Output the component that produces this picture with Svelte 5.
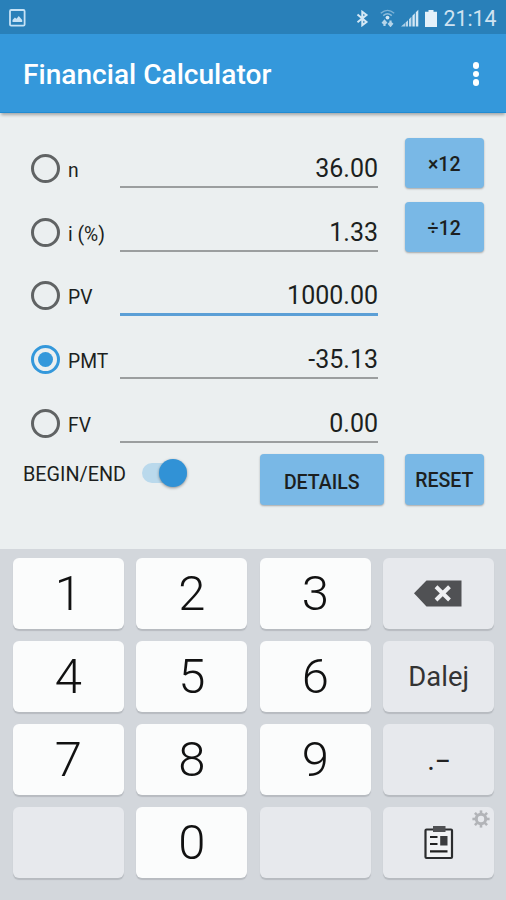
<script>
  // Financial calculator: five time-value fields, one of them is solved for.
  let rows = $state([
    { id: "n", label: "n", value: "36.00", action: "×12" },
    { id: "i", label: "i (%)", value: "1.33", action: "÷12" },
    { id: "pv", label: "PV", value: "1000.00" },
    { id: "pmt", label: "PMT", value: "-35.13" },
    { id: "fv", label: "FV", value: "0.00" },
  ]);

  let solveFor = $state("pmt");
  let focused = $state("pv");
  let atEnd = $state(true);

  // keypad, row by row
  const keys = [
    "1", "2", "3", "del",
    "4", "5", "6", "next",
    "7", "8", "9", "sign",
    "", "0", "", "clip",
  ];
  const isDigit = (k) => /^\d$/.test(k);

  function scale(row) {
    const v = Number(row.value);
    row.value = (row.action === "×12" ? v * 12 : v / 12).toFixed(2);
  }
  function reset() {
    for (const r of rows) r.value = "0.00";
  }
  function press(k) {
    const row = rows.find((r) => r.id === focused);
    if (isDigit(k)) row.value += k;
    else if (k === "del") row.value = row.value.slice(0, -1);
    else if (k === "next") focused = rows[(rows.indexOf(row) + 1) % rows.length].id;
  }
</script>

<div class="screen">
  <div class="status">
    <svg class="pic" width="17" height="18" viewBox="0 0 17 18">
      <rect x="1" y="1" width="14.6" height="15.6" rx="1.2" fill="none" stroke="#c6e2f5" stroke-width="1.8" />
      <path d="M3.5 13V11l2.4-2.6 1.6 1.4L9.8 7l3.4 4v2z" fill="#c6e2f5" />
    </svg>
    <div class="tray">
      <svg width="13" height="17" viewBox="0 0 13 17" fill="none" stroke="#d5e8f5" stroke-width="2">
        <path d="M1.5 4.5 10.5 12 6.3 15.2V1.8L10.5 5 1.5 12.3" />
      </svg>
      <svg width="15" height="18" viewBox="0 0 15 18" fill="none" stroke="#b5d4e9">
        <path d="M.8 4.2Q7.5-1.4 14.2 4.2" stroke-width="1.4" opacity=".6" />
        <path d="M3.2 6.6Q7.5 3 11.8 6.6" stroke-width="1.4" opacity=".7" />
        <circle cx="7.5" cy="8.6" r="1.9" fill="#d5e8f5" stroke="none" />
        <path d="M4.5 17v-4.5M2.4 14.5l2.1-2.6 2.1 2.6M10.5 11.5V16M8.4 14l2.1 2.6L12.6 14" stroke-width="2.2" />
      </svg>
      <svg width="18" height="18" viewBox="0 0 18 18" fill="#d5e8f5">
        <path d="M0 17.5 4 14v3.5z" opacity=".75" />
        <path d="M4.6 13.5 7 11.2v6.3H4.6zM8 10.2l2.4-2.4v9.7H8z" opacity=".85" />
        <path d="M11.4 6.8l2.4-2.5v13.2h-2.4zM14.8 3.3 17.3.8v16.7h-2.5z" />
      </svg>
      <svg width="12" height="17" viewBox="0 0 12 17" fill="#e4f1fa">
        <path d="M3.5 0h5v1.8H12V17H0V1.8h3.5z" />
      </svg>
      <span class="clock">21:14</span>
    </div>
  </div>

  <header>
    <h1>Financial Calculator</h1>
    <button class="more" aria-label="More options"><i></i><i></i><i></i></button>
  </header>

  <main>
    {#each rows as row (row.id)}
      <div class="row">
        <button class="pick" onclick={() => (solveFor = row.id)}>
          <span class="radio" class:on={solveFor === row.id}></span>
          <span class="name">{row.label}</span>
        </button>
        <button class="field" class:focus={focused === row.id} onclick={() => (focused = row.id)}>{row.value}</button>
        {#if row.action}
          <button class="btn side" onclick={() => scale(row)}>{row.action}</button>
        {/if}
      </div>
    {/each}

    <div class="actions">
      <button class="mode" onclick={() => (atEnd = !atEnd)}>
        <span class="mode-label">BEGIN/END</span>
        <span class="switch" class:on={atEnd}><span class="thumb"></span></span>
      </button>
      <button class="btn details">DETAILS</button>
      <button class="btn side" onclick={reset}>RESET</button>
    </div>
  </main>

  <div class="keypad">
    {#each keys as k}
      <button class="key" class:digit={isDigit(k)} aria-label={k || "blank"} onclick={() => press(k)}>
        {#if k === "del"}
          <svg class="del" width="48" height="27" viewBox="0 0 48 27">
            <path d="M0 13.3 12.5.5H47.5v26H12.5z" fill="#505154" />
            <path d="M22 6.8 35.5 20M35.5 6.8 22 20" stroke="#eeeff2" stroke-width="4" />
          </svg>
        {:else if k === "next"}
          <span class="word">Dalej</span>
        {:else if k === "sign"}
          <span class="sign">.<b>-</b></span>
        {:else if k === "clip"}
          <svg width="30" height="34" viewBox="0 0 30 34">
            <rect x="1.5" y="3.5" width="26.5" height="28.5" rx="1" fill="#f1f2f4" stroke="#2b2c2e" stroke-width="2.2" />
            <rect x="9" y="0" width="12.5" height="6" fill="#505154" />
            <path d="M6 11h7.5M6 18h7.5M6 25.3h17.5" stroke="#222" stroke-width="2.2" />
            <rect x="16.2" y="10" width="7.3" height="9.5" fill="#3b3c3e" />
          </svg>
          <svg class="gear" width="18" height="18" viewBox="-9 -9 18 18" fill="none" stroke="#b2b4b8">
            <circle r="4.7" stroke-width="3" />
            {#each [0, 45, 90, 135, 180, 225, 270, 315] as a}
              <path d="M0-5.5V-8.6" stroke-width="2.6" transform="rotate({a})" />
            {/each}
          </svg>
        {:else}
          {k}
        {/if}
      </button>
    {/each}
  </div>
</div>

<style>
  :global(body) { margin: 0; }
  .screen {
    width: 506px; height: 900px; overflow: hidden; display: flex; flex-direction: column;
    background: #ebeff0; color: #1c1f20; font-family: Roboto, "Noto Sans", sans-serif;
  }
  button { font: inherit; color: inherit; border: 0; padding: 0; background: none; cursor: pointer; }

  .status {
    height: 34px; flex: none; box-sizing: border-box; padding: 2px 9.5px 0 9px; background: #2980b9;
    display: flex; align-items: center; justify-content: space-between;
  }
  .tray { display: flex; align-items: center; gap: 6px; }
  .tray svg:nth-child(1) { margin-right: 5px; }
  .clock { color: #cfe3f1; font-size: 21.3px; line-height: 30px; padding-top: 2px; }

  header {
    height: 79px; flex: none; box-sizing: border-box; padding: 0 23px; background: #3498db;
    border-bottom: 1px solid #218bd2; box-shadow: 0 3px 3px -1px rgba(0, 0, 0, 0.3);
    display: flex; align-items: center; justify-content: space-between;
  }
  h1 { margin: 3px 0 0; font-size: 28.1px; font-weight: 500; color: #fff; }
  .more { width: 14px; display: flex; flex-direction: column; align-items: center; gap: 2px; padding-top: 2px; }
  .more i { width: 6.4px; height: 6.4px; border-radius: 50%; background: #fff; }

  main { height: 436px; flex: none; box-sizing: border-box; padding: 23.6px 22px 0 0; }
  .row { height: 63.7px; display: flex; align-items: flex-start; }
  .pick { width: 120px; height: 63.7px; box-sizing: border-box; padding-left: 31px; display: flex; align-items: center; gap: 8px; }
  .radio {
    width: 29px; height: 29px; box-sizing: border-box; border: 3px solid #606364; border-radius: 50%;
    flex: none; display: grid; place-items: center;
  }
  .radio.on { border-color: #3498db; }
  .radio.on::after { content: ""; width: 15px; height: 15px; border-radius: 50%; background: #3498db; }
  .name { font-size: 19.3px; line-height: 24px; padding-top: 5px; }
  .field {
    width: 258px; height: 51.5px; box-sizing: border-box; padding-top: 15px; margin-right: 26.5px;
    border-bottom: 2px solid #9b9e9f; text-align: right; font-size: 25px; line-height: 30px;
  }
  .field.focus { height: 52.5px; border-bottom: 3px solid #5b9fd6; }

  .btn {
    height: 50.5px; border-radius: 4px; background: #79b8e6; font-size: 19.5px; font-weight: 500;
    box-shadow: 0 1px 2px rgba(0, 0, 0, 0.3); text-align: center;
  }
  .side { width: 79.5px; padding-top: 3px; }
  .row .side { margin-top: 1.3px; }
  .actions { display: flex; align-items: flex-start; margin-top: -1px; }
  .mode { width: 260px; height: 38px; box-sizing: border-box; padding-left: 23px; display: flex; align-items: center; gap: 15.5px; }
  .mode-label { font-size: 19.8px; padding-top: 2px; }
  .switch { width: 45.5px; height: 20px; border-radius: 10px; background: #c3c6c7; display: flex; align-items: center; }
  .switch.on { background: #bad9ec; justify-content: flex-end; }
  .thumb { width: 28px; height: 28px; border-radius: 50%; background: #3192d6; box-shadow: 0 1px 3px rgba(0, 0, 0, 0.4); }
  .details { width: 123.5px; margin-right: 21px; padding-top: 7px; }

  .keypad {
    flex: 1; box-sizing: border-box; padding: 9px 12px 0 13px; background: #d3d7dc;
    display: grid; grid-template-columns: repeat(4, 1fr); grid-auto-rows: 71px; gap: 12px 12.8px; align-content: start;
  }
  .key {
    position: relative; border-radius: 6px; background: #e7e9ed; box-shadow: 0 2px 1px #b7bbc0;
    display: flex; align-items: center; justify-content: center;
  }
  .digit { background: #fbfcfc; color: #111; font-size: 49px; font-weight: 300; line-height: 71px; }
  .del { margin-right: 1px; }
  .word { font-size: 27.4px; color: #333; }
  .sign { font-size: 29px; line-height: 30px; color: #222; display: flex; gap: 1px; }
  .sign b { font-weight: 400; transform: scaleX(1.7); transform-origin: left; padding-right: 6px; }
  .gear { position: absolute; top: 3px; right: 4px; }
</style>
